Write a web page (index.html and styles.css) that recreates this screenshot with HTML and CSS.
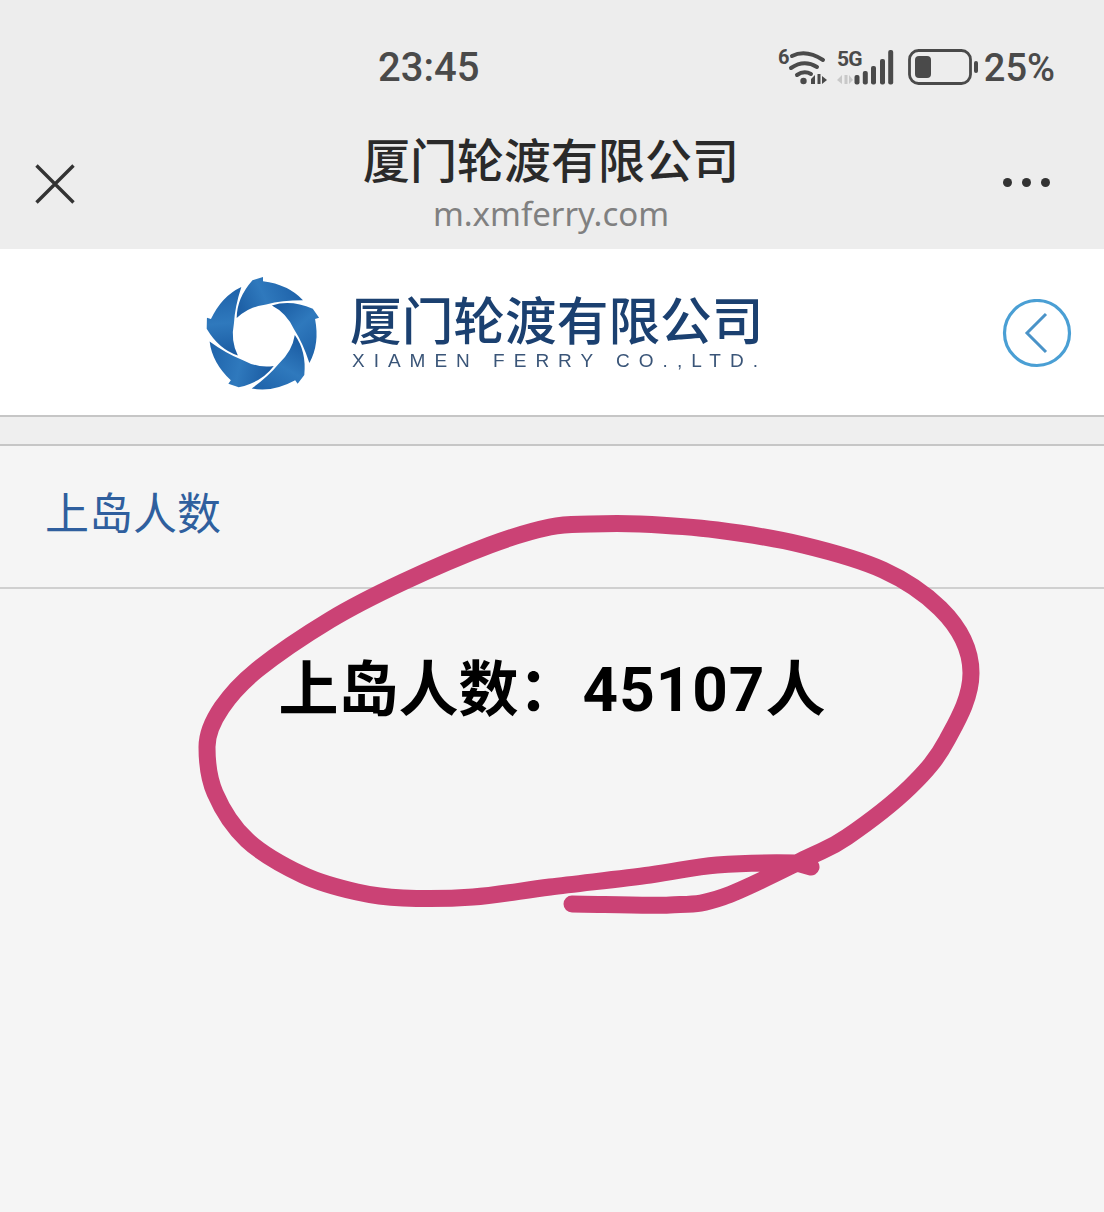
FILE: index.html
```html
<!DOCTYPE html>
<html lang="zh-CN">
<head>
<meta charset="utf-8">
<title>厦门轮渡有限公司</title>
<link rel="stylesheet" href="styles.css">
</head>
<body>
<div class="page">
  <header class="top">
    <div class="status">
      <span class="time">23:45</span>
      <svg class="signal" width="205" height="42" viewBox="775 45 205 42">
        <text x="778" y="63" class="mini">6</text>
        <g fill="none" stroke="#4a4a4a" stroke-linecap="round">
          <path d="M792 55 Q806 48 823 59" stroke-width="4"/>
          <path d="M791 67 Q804 58 817 66" stroke-width="4"/>
          <path d="M797 74 Q804 69 811 73" stroke-width="4"/>
        </g>
        <circle cx="803.500" cy="80" r="3.200" fill="#4a4a4a"/>
        <path d="M815 74 L815 83 L811 83 L811 78 Z M817.500 73 L817.500 83 L820.500 83 L820.500 73 Z M822 75 L827 79 L822 83 Z" fill="#4a4a4a"/>
        <text x="837" y="65" class="mini narrow">5G</text>
        <path d="M842 74 L842 83 L837 79 Z M844.500 74 L847.500 74 L847.500 83 L844.500 83 Z M849 74 L853 79 L849 83 Z" fill="#c8c8c8"/>
        <g fill="#4a4a4a">
          <rect x="854.500" y="74" width="5" height="9.500" rx="2"/>
          <rect x="862.800" y="70" width="5" height="13.500" rx="2"/>
          <rect x="871" y="65" width="5" height="18.500" rx="2"/>
          <rect x="880" y="58" width="5" height="25.500" rx="2"/>
          <rect x="888.200" y="49" width="5" height="34.500" rx="2"/>
        </g>
        <rect x="909.500" y="49.500" width="61" height="33" rx="9" fill="none" stroke="#4a4a4a" stroke-width="2.800"/>
        <rect x="915" y="55" width="16" height="22" rx="4" fill="#4a4a4a"/>
        <rect x="974" y="60" width="4" height="12" rx="2" fill="#4a4a4a"/>
      </svg>
      <span class="battery">25%</span>
    </div>
    <div class="nav">
      <svg class="close" width="40" height="40" viewBox="0 0 40 40">
        <path d="M1.500 1.500 L38.500 38.500 M38.500 1.500 L1.500 38.500" stroke="#333" stroke-width="3.400" fill="none"/>
      </svg>
      <div class="nav-title">
        <div class="name">厦门轮渡有限公司</div>
        <div class="domain">m.xmferry.com</div>
      </div>
      <div class="dots"><i></i><i></i><i></i></div>
    </div>
  </header>

  <div class="brand">
    <svg class="swirl" width="120" height="120" viewBox="-57 -57 114 114">
      <defs>
        <linearGradient id="blade" gradientUnits="userSpaceOnUse" x1="-28" y1="-20" x2="40" y2="-50">
          <stop offset="0" stop-color="#18589f"/>
          <stop offset="0.45" stop-color="#2f79bd"/>
          <stop offset="1" stop-color="#1a5ca4"/>
        </linearGradient>
        <path id="b" d="M-25 -17 Q-25 -36 -10 -53 L0 -56 L0 -52 Q24 -49 38 -34 Q18 -34 3 -30 Q-14 -28 -25 -17 Z" fill="url(#blade)"/>
      </defs>
      <use href="#b"/>
      <use href="#b" transform="rotate(72)"/>
      <use href="#b" transform="rotate(144)"/>
      <use href="#b" transform="rotate(216)"/>
      <use href="#b" transform="rotate(288)"/>
    </svg>
    <div class="wordmark">
      <div class="cn">厦门轮渡有限公司</div>
      <div class="en">XIAMEN FERRY CO.,LTD.</div>
    </div>
    <svg class="back" width="70" height="70" viewBox="0 0 70 70">
      <circle cx="35" cy="34" r="32.500" fill="none" stroke="#4a9fd4" stroke-width="3.200"/>
      <path d="M44 15 L25 34 L44 53" fill="none" stroke="#4a93c8" stroke-width="3"/>
    </svg>
  </div>

  <div class="band"></div>

  <h2 class="section">上岛人数</h2>

  <main class="content">
    <p class="count">上岛人数：<span class="num">45107</span>人</p>
  </main>

  <svg class="scribble" width="1104" height="1212" viewBox="0 0 1104 1212">
    <path d="M811 867 L797 863 C781.300 862.700 741.500 863 717 865 C692.500 867 677.800 871.300 650 875 C622.200 878.700 579.500 883.300 550 887 C520.500 890.700 497.500 895.200 473 897 C448.500 898.800 422.300 898.800 403 898 C383.700 897.200 373.700 895.800 357 892 C340.300 888.200 321.300 883.700 303 875 C284.700 866.300 261.700 853.700 247 840 C232.300 826.300 221.700 808.500 215 793 C208.300 777.500 207 762 207 747 C207 722 230 692 257 670 C274.200 656.200 305.700 634.700 330 620 C354.300 605.300 376.300 594.500 403 582 C429.700 569.500 465.500 554.200 490 545 C514.500 535.800 533.300 530.500 550 527 C566.700 523.500 575 524.500 590 524 C605 523.500 618.800 523 640 524 C661.200 525 689.800 526.500 717 530 C744.200 533.500 775.300 538.300 803 545 C830.700 551.700 860.200 559.700 883 570 C918 586 971 622 971 673 C971 698 957.200 721 947 740 C936.800 759 926.700 770.800 910 787 C893.300 803.200 864.200 825.200 847 837 C829.800 848.800 827.700 848 807 858 C786.300 868 745.800 889.200 723 897 C700.200 904.800 695.500 903.800 670 905 C644.500 906.200 595 904 572 904" fill="none" stroke="#cb4275" stroke-width="17" stroke-linecap="round" stroke-linejoin="round"/>
  </svg>
</div>
</body>
</html>
```

FILE: styles.css
```css
* { box-sizing: border-box; }
html, body { margin: 0; padding: 0; }
body {
  width: 1104px;
  height: 1212px;
  overflow: hidden;
  background: #f5f5f5;
  font-family: "Noto Sans CJK SC", "Noto Sans", sans-serif;
}
.page { position: relative; width: 1104px; height: 1212px; }

.top { height: 249px; background: #ededed; display: flex; flex-direction: column; }
.status {
  display: flex;
  align-items: center;
  height: 90px;
  padding: 45px 0 0 378px;
  color: #4a4a4a;
  font-family: Roboto, "Noto Sans", sans-serif;
  font-weight: 500;
  font-size: 38px;
}
.time { font-size: 40px; line-height: 44px; }
.signal { margin-left: auto; margin-top: -1px; display: block; }
.battery { margin: 0 49px 0 4px; line-height: 44px; }
.mini {
  font-family: Roboto, sans-serif;
  font-weight: 700;
  font-size: 20px;
  fill: #4a4a4a;
}
.narrow { font-size: 21px; letter-spacing: -0.8px; }

.nav {
  flex: 1;
  display: flex;
  align-items: flex-start;
  padding: 0 54px 0 35px;
  position: relative;
}
.close { margin-top: 74px; flex: none; display: block; }
.nav-title { flex: 1; text-align: center; padding: 37px 0 0 0; margin-left: 24px; }
.name { font-size: 47px; line-height: 62px; color: #2a2a2a; font-weight: 500; }
.domain {
  font-family: "Noto Sans", sans-serif;
  font-size: 33px;
  line-height: 44px;
  margin-top: 3px;
  color: #808080;
}
.dots { display: flex; gap: 10px; margin-top: 88px; }
.dots i { width: 9px; height: 9px; border-radius: 50%; background: #333; display: block; }

.brand {
  height: 168px;
  background: #fff;
  border-bottom: 2px solid #c6c6c6;
  display: flex;
  align-items: center;
  padding: 0 32px 0 203px;
}
.swirl { display: block; flex: none; margin-top: 7px; filter: blur(0.7px); }
.wordmark { margin-left: 27px; color: #1b4070; filter: blur(0.5px); margin-top: -5px; }
.cn { font-size: 51.700px; line-height: 60px; font-weight: 500; white-space: nowrap; }
.en {
  font-family: "Liberation Sans", sans-serif;
  font-size: 19px;
  line-height: 20px;
  letter-spacing: 9px;
  color: #3a5578;
  white-space: nowrap;
  margin: 3px 0 0 2px;
}
.back { margin-left: auto; display: block; flex: none; margin-top: 3px; }

.band { height: 29px; background: #efefef; border-bottom: 2px solid #c6c6c6; }

.section {
  margin: 0;
  height: 143px;
  border-bottom: 2px solid #d0d0d0;
  padding: 33px 0 0 45px;
  font-size: 44px;
  line-height: 64px;
  font-weight: 400;
  color: #2f5f9e;
}

.content { padding-top: 60px; }
.count {
  margin: 0;
  text-align: center;
  font-size: 60px;
  line-height: 72px;
  font-weight: 700;
  color: #000;
}
.num { font-family: Roboto, sans-serif; font-size: 62px; letter-spacing: 1px; margin-left: 4px; }

.scribble { position: absolute; left: 0; top: 0; pointer-events: none; }
```
